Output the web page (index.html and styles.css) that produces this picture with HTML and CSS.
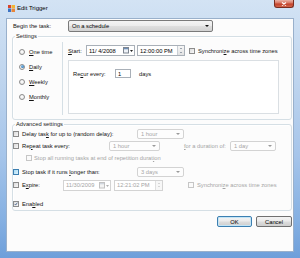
FILE: index.html
```html
<!DOCTYPE html>
<html>
<head>
<meta charset="utf-8">
<title>Edit Trigger</title>
<link rel="stylesheet" href="styles.css">
</head>
<body>
<div class="window">
  <div class="titlebar">
    <svg class="appicon" width="7" height="7" viewBox="0 0 7 7">
      <rect x="0" y="0" width="3" height="3" fill="#d9442b"/>
      <rect x="3.5" y="0" width="3.5" height="3" fill="#f2b431"/>
      <rect x="0" y="3.5" width="3" height="3.5" fill="#3b73c4"/>
      <rect x="3.5" y="3.5" width="3.5" height="3.5" fill="#e8863a"/>
    </svg>
    <span class="title">Edit Trigger</span>
    <div class="close">
      <svg width="6" height="4" viewBox="0 0 6 4"><path d="M1 0.5 L5 3.5 M5 0.5 L1 3.5" stroke="#fff" stroke-width="1.1"/></svg>
    </div>
  </div>
  <div class="client">
    <div class="begin-row">
      <span class="begin-lbl">Begin the task:</span>
      <div class="combo active begin-combo"><span class="ctext">On a schedule</span><i class="arrow"></i></div>
    </div>

    <fieldset class="group settings">
      <legend>Settings</legend>
      <div class="settings-body">
        <div class="radios">
          <div class="radio-row"><span class="rb"></span><span><u>O</u>ne time</span></div>
          <div class="radio-row"><span class="rb on"></span><span><u>D</u>aily</span></div>
          <div class="radio-row"><span class="rb"></span><span><u>W</u>eekly</span></div>
          <div class="radio-row"><span class="rb"></span><span><u>M</u>onthly</span></div>
        </div>
        <div class="vsep"></div>
        <div class="schedule">
          <div class="start-row">
            <span class="start-lbl"><u>S</u>tart:</span>
            <div class="field date-start"><span class="ftext">11/ 4/2008</span>
              <svg class="cal" width="10" height="7" viewBox="0 0 10 7"><rect x="0.5" y="0.5" width="5" height="5.5" fill="#eef2f7" stroke="#7d8590"/><rect x="1" y="1" width="4" height="1.3" fill="#6f8fb8"/><path d="M7 3 L10 3 L8.5 5 Z" fill="#222"/></svg>
            </div>
            <div class="field time-start"><span class="ftext">12:00:00 PM</span>
              <span class="spin"><i class="up"></i><i class="down"></i></span>
            </div>
            <span class="cb"></span>
            <span class="sync-lbl">Synchroni<u>z</u>e across time zones</span>
          </div>
          <div class="recur-box">
            <div class="recur-row">
              <span class="recur-lbl">Re<u>c</u>ur every:</span>
              <div class="field num"><span class="ftext">1</span></div>
              <span class="days">days</span>
            </div>
          </div>
        </div>
      </div>
    </fieldset>

    <fieldset class="group advanced">
      <legend>Advanced settings</legend>
      <div class="adv-row r1">
        <span class="cb"></span>
        <span class="lbl w115">Delay tas<u>k</u> for up to (random delay):</span>
        <div class="combo dis w47"><span class="ctext">1 hour</span><i class="arrow"></i></div>
      </div>
      <div class="adv-row r2">
        <span class="cb"></span>
        <span class="lbl w87">Re<u>p</u>eat task every:</span>
        <div class="combo dis w51"><span class="ctext">1 hour</span><i class="arrow"></i></div>
        <span class="lbl dur gray"><u>f</u>or a duration of:</span>
        <div class="combo dis w46"><span class="ctext">1 day</span><i class="arrow"></i></div>
      </div>
      <div class="adv-row r3">
        <span class="cb disabled"></span>
        <span class="lbl gray">Stop all running tasks at end of repetition durat<u>i</u>on</span>
      </div>
      <div class="adv-row r4">
        <span class="cb hot"></span>
        <span class="lbl w115">Stop task if it runs <u>l</u>onger than:</span>
        <div class="combo dis w47"><span class="ctext">3 days</span><i class="arrow"></i></div>
      </div>
      <div class="adv-row r5">
        <span class="cb"></span>
        <span class="lbl w41">E<u>x</u>pire:</span>
        <div class="field dis date-exp"><span class="ftext">11/30/2009</span>
          <svg class="cal" width="10" height="7" viewBox="0 0 10 7"><rect x="0.5" y="0.5" width="5" height="5.5" fill="#f4f4f4" stroke="#c2c2c2"/><rect x="1" y="1" width="4" height="1.3" fill="#d0d6de"/><path d="M7 3 L10 3 L8.5 5 Z" fill="#b0b0b0"/></svg>
        </div>
        <div class="field dis time-exp"><span class="ftext">12:21:02 PM</span>
          <span class="spin dis"><i class="up"></i><i class="down"></i></span>
        </div>
        <span class="cb disabled exp-cb"></span>
        <span class="lbl gray">Synchroni<u>z</u>e across time zones</span>
      </div>
      <div class="adv-row r6">
        <span class="cb checked">
          <svg width="6" height="6" viewBox="0 0 6 6"><path d="M1 3 L2.5 4.6 L5 1" fill="none" stroke="#2c4b7a" stroke-width="1.1"/></svg>
        </span>
        <span class="lbl">Ena<u>b</u>led</span>
      </div>
    </fieldset>

    <div class="buttons">
      <div class="btn default">OK</div>
      <div class="btn">Cancel</div>
    </div>
  </div>
</div>
</body>
</html>
```

FILE: styles.css
```css
* { box-sizing: border-box; }
html, body { margin: 0; padding: 0; }
body {
  width: 300px;
  height: 258px;
  overflow: hidden;
  font-family: "Liberation Sans", Arial, sans-serif;
  font-size: 5.75px;
  color: #111;
}
u { text-decoration: underline; text-underline-offset: 1px; }

.window {
  width: 300px;
  height: 258px;
  display: flex;
  flex-direction: column;
  background: linear-gradient(to bottom, #d3e3f4 0%, #bfd5ee 30%, #a6c5ea 60%, #85b0e2 85%, #6e9fda 100%);
}

.titlebar {
  height: 18px;
  display: flex;
  align-items: flex-start;
  padding-left: 8px;
}
.appicon { margin-top: 5px; margin-right: 2px; }
.title {
  margin-top: 4px;
  font-size: 6px;
  line-height: 8px;
  color: #000;
}
.close {
  margin-left: auto;
  margin-right: 6px;
  width: 20px;
  height: 8px;
  border: 1px solid #7a2d20;
  border-top: none;
  border-radius: 0 0 3px 3px;
  background: linear-gradient(to bottom, #eab2a6 0%, #d8735f 45%, #c2412a 55%, #d2654c 100%);
  display: flex;
  align-items: center;
  justify-content: center;
}

.client {
  flex: 1;
  margin: 0 6px 6px;
  border: 1px solid #99b0cb;
  background: #fcfcfc;
  padding: 1px 1px 5px 5px;
  display: flex;
  flex-direction: column;
}

/* begin row */
.begin-row {
  height: 12px;
  display: flex;
  align-items: center;
  padding-left: 1px;
}
.begin-lbl { width: 55px; }
.begin-combo { width: 145px; height: 12px; }

/* combos */
.combo {
  display: flex;
  align-items: center;
  padding-left: 3px;
  padding-right: 3px;
  border-radius: 2px;
}
.combo .ctext { flex: 1; line-height: 8px; white-space: nowrap; }
.combo .arrow {
  width: 0; height: 0;
  border-left: 2px solid transparent;
  border-right: 2px solid transparent;
  border-top: 2px solid #111;
}
.combo.active {
  border: 1px solid #7a7a7a;
  background: linear-gradient(to bottom, #f4f4f4 0%, #ececec 48%, #dedede 52%, #d2d2d2 100%);
  color: #000;
}
.combo.dis {
  height: 10px;
  border: 1px solid #d3d3d3;
  background: #fdfdfd;
  color: #a5a5a5;
}
.combo.dis .arrow { border-top-color: #9a9a9a; }
.w47 { width: 47px; }
.w51 { width: 51px; }
.w46 { width: 46px; }

/* group boxes */
fieldset.group {
  margin: 0;
  padding: 0;
  min-width: 0;
  border: 1px solid #d5dfe5;
  border-radius: 3px;
  box-shadow: inset 1px 1px 0 #ffffff;
}
fieldset.group legend {
  padding: 0 1px;
  margin-left: 2px;
  line-height: 8px;
  color: #1b1b1b;
}
.settings { margin-top: 3px; }
.advanced { margin-top: 4px; padding: 6px 0 6px 4px; }

/* settings */
.settings-body { display: flex; align-items: flex-start; }
.radios {
  width: 49px;
  padding: 4px 0 0 6px;
}
.radio-row {
  height: 15px;
  display: flex;
  align-items: center;
}
.rb {
  width: 6px;
  height: 6px;
  border-radius: 50%;
  border: 1px solid #8c8c8c;
  background: radial-gradient(circle at 50% 40%, #ffffff 0%, #e4e4e4 100%);
  margin-right: 4px;
  display: flex;
  align-items: center;
  justify-content: center;
}
.rb.on::after {
  content: "";
  width: 3px;
  height: 3px;
  border-radius: 50%;
  background: radial-gradient(circle at 40% 35%, #7fc0f0 0%, #1f5f9a 100%);
}
.vsep {
  width: 1px;
  height: 73px;
  margin-top: 2px;
  background: #d5dfe5;
}
.schedule {
  padding: 5px 0 5px 5px;
}
.start-row {
  height: 11px;
  display: flex;
  align-items: center;
}
.start-lbl { width: 18px; }
.field {
  height: 11px;
  border: 1px solid #a9b0b8;
  background: #fff;
  display: flex;
  align-items: center;
  padding-left: 2px;
  color: #000;
}
.field .ftext { flex: 1; line-height: 8px; white-space: nowrap; }
.field.dis { border-color: #d3d3d3; color: #a5a5a5; }
.date-start { width: 49px; padding-right: 1px; }
.time-start { width: 48px; margin-left: 2px; padding-right: 0; }
.cal { display: block; }
.spin {
  width: 7px;
  height: 9px;
  border-left: 1px solid #c9ced4;
  background: linear-gradient(to bottom, #f6f6f6, #e2e2e2);
  display: flex;
  flex-direction: column;
  align-items: center;
  justify-content: space-evenly;
}
.spin i {
  width: 0; height: 0;
  border-left: 1.5px solid transparent;
  border-right: 1.5px solid transparent;
}
.spin .up { border-bottom: 1.5px solid #4a5a70; }
.spin .down { border-top: 1.5px solid #4a5a70; }
.spin.dis { background: #f7f7f7; border-left-color: #e0e0e0; }
.spin.dis .up { border-bottom-color: #b5b5b5; }
.spin.dis .down { border-top-color: #b5b5b5; }

.start-row .cb { margin-left: 4px; margin-right: 3px; }
.sync-lbl { white-space: nowrap; }

.recur-box {
  width: 211px;
  height: 54px;
  margin-top: 4px;
  border: 1px solid #dadfe3;
  background: #ffffff;
  padding: 8px 0 0 4px;
}
.recur-row { display: flex; align-items: center; height: 9px; }
.recur-lbl { width: 42px; }
.num { width: 16px; height: 9px; }
.days { margin-left: 8px; }

/* checkboxes */
.cb {
  width: 6px;
  height: 6px;
  flex: none;
  border: 1px solid #8c8c8c;
  background: linear-gradient(135deg, #dcdcdc 0%, #f8f8f8 100%);
  display: flex;
  align-items: center;
  justify-content: center;
}
.cb.disabled { border-color: #c6c6c6; background: #fafafa; }
.cb.hot {
  border-color: #3c7fb1;
  background: linear-gradient(135deg, #a9dbf4 0%, #dff3fc 100%);
}
.cb.checked svg { display: block; }

/* advanced */
.adv-row {
  display: flex;
  align-items: center;
  white-space: nowrap;
}
.adv-row .cb { margin-right: 3px; }
.lbl { white-space: nowrap; }
.gray { color: #a5a5a5; }
.w115 { width: 115px; }
.w87 { width: 87px; }
.w41 { width: 41px; }
.dur { width: 46px; margin-left: 24px; }
.r1 { height: 12px; }
.r2 { height: 11px; }
.r3 { height: 14px; padding-left: 13px; }
.r3 .cb { margin-right: 2px; }
.r4 { height: 14px; }
.r5 { height: 12px; }
.r6 { height: 12px; margin-top: 7px; }
.date-exp { width: 48px; padding-right: 1px; }
.time-exp { width: 49px; margin-left: 3px; }
.exp-cb { margin-left: 25px; }

/* buttons */
.buttons {
  margin-top: 5px;
  height: 11px;
  display: flex;
  justify-content: flex-end;
  gap: 4px;
}
.btn {
  width: 36px;
  height: 11px;
  border: 1px solid #707070;
  border-radius: 2px;
  background: linear-gradient(to bottom, #f3f3f3 0%, #ebebeb 48%, #dddddd 52%, #cfcfcf 100%);
  display: flex;
  align-items: center;
  justify-content: center;
  color: #000;
  line-height: 8px;
}
.btn.default {
  width: 35px;
  border-color: #3c7fb1;
  box-shadow: inset 0 0 0 1px #c4e5f6;
}
```
